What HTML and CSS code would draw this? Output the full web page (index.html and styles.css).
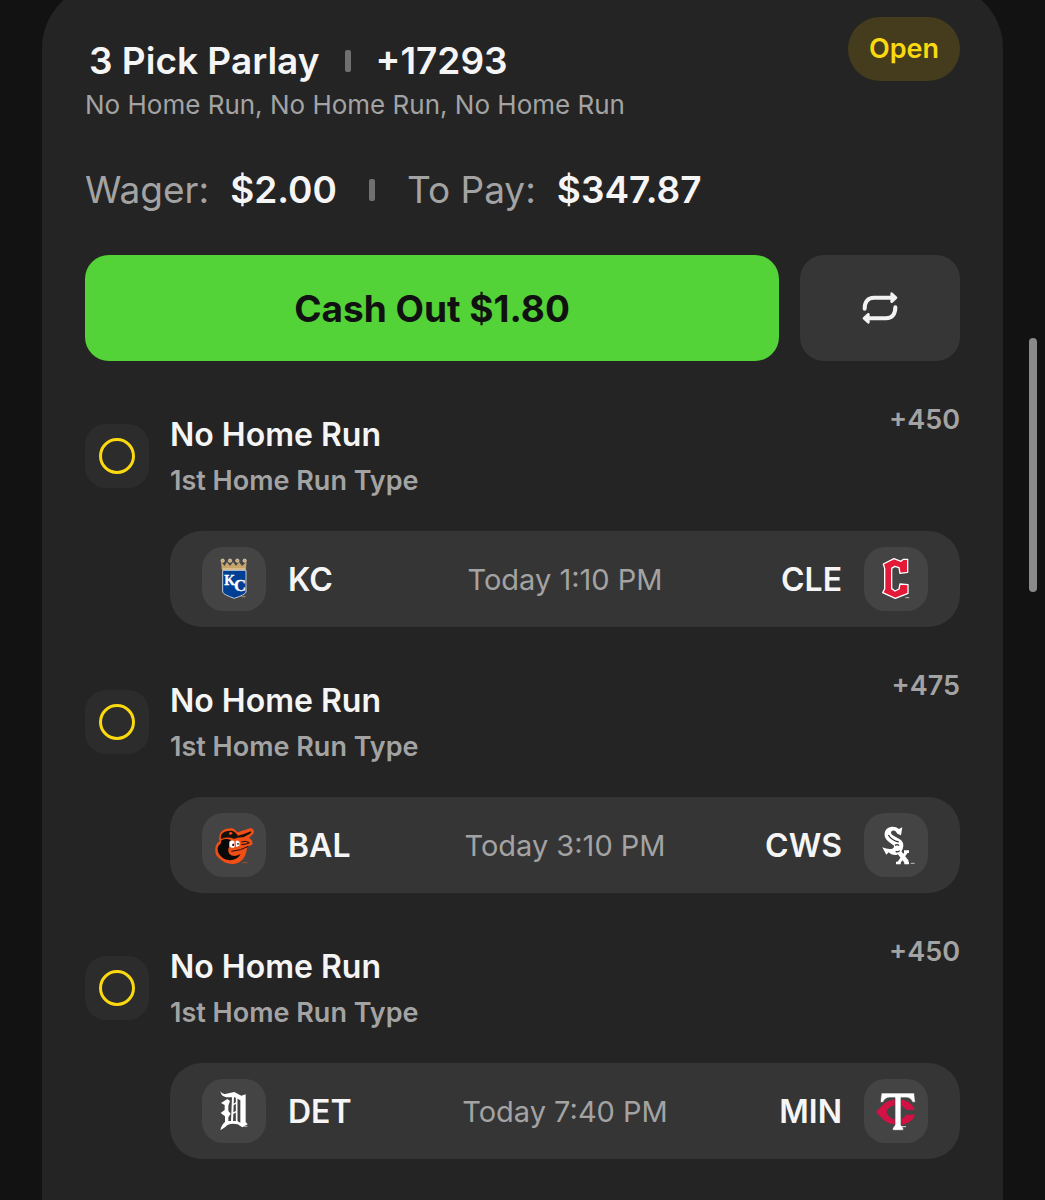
FILE: index.html
```html
<!DOCTYPE html>
<html lang="en">
<head>
<meta charset="utf-8">
<meta name="viewport" content="width=device-width, initial-scale=1">
<title>3 Pick Parlay</title>
<link rel="stylesheet" href="styles.css">
</head>
<body>
<main class="page">
  <article class="card">
    <header class="header">
      <div class="heading">
        <h1 class="title">3 Pick Parlay <span class="divider"></span> +17293</h1>
        <p class="summary">No Home Run, No Home Run, No Home Run</p>
      </div>
      <span class="status">Open</span>
    </header>

    <div class="stakes">
      <p class="stake"><span class="stake-label">Wager:</span><strong>$2.00</strong></p>
      <span class="divider"></span>
      <p class="stake"><span class="stake-label">To Pay:</span><strong>$347.87</strong></p>
    </div>

    <div class="actions">
      <button class="cashout" type="button">Cash Out $1.80</button>
      <button class="repeat" type="button" aria-label="Repeat bet">
        <svg width="40" height="40" viewBox="0 -6 120 120" fill="none" stroke="#f2f2f2" stroke-width="12" stroke-linecap="round" stroke-linejoin="round">
          <path d="M14 56C14 36 23 23 42 23H98M106 52C106 72 97 85 78 85H22"/>
          <path d="M95 11L108 23L95 35ZM25 73L12 85L25 97Z" fill="#f2f2f2" stroke-width="8"/>
        </svg>
      </button>
    </div>

    <section class="pick">
      <div class="pick-head">
        <span class="marker"></span>
        <div class="pick-text">
          <h2 class="pick-name">No Home Run</h2>
          <p class="pick-type">1st Home Run Type</p>
        </div>
        <span class="odds">+450</span>
      </div>
      <div class="game">
        <div class="team">
          <svg class="logo" viewBox="6 6 192 192" aria-hidden="true">
            <path d="M68 76V141Q70 149 103 160Q136 149 138 141V76Z" fill="#003f93" stroke="#bcc9dc" stroke-width="3"/>
            <path d="M66 74L64 52L74 64L81 52L90 64L99 52L108 64L117 52L126 64L139 52L137 74Z" fill="#c9a468" stroke="#dcc494" stroke-width="1"/>
            <path d="M68 72H136" stroke="#e9d5ad" stroke-width="3"/>
            <g fill="#c9a468" stroke="#f2ead8" stroke-width="2"><circle cx="68" cy="47" r="5"/><circle cx="90" cy="47" r="5"/><circle cx="112" cy="47" r="5"/><circle cx="134" cy="47" r="5"/></g>
            <g fill="#fff" font-family="Liberation Serif, serif"><text x="73" y="120" font-size="41" stroke="#fff" stroke-width="1">K</text><text x="102" y="137" font-size="50" stroke="#fff" stroke-width="1">C</text></g>
            <path d="M124 155H137" stroke="#a58f63" stroke-width="3"/>
          </svg>
          <span>KC</span>
        </div>
        <time class="time">Today 1:10 PM</time>
        <div class="team team-away">
          <span>CLE</span>
          <svg class="logo" viewBox="6 6 192 192" aria-hidden="true">
            <path d="M64 57L96 41L117 49L124 43H137V82L114 85L111 68L98 64L89 70V131L99 138L111 132L114 117L138 119V145L100 160L62 143L68 132V70Z" fill="#e31937" stroke="#fff" stroke-width="4" stroke-linejoin="round"/>
            <path d="M130 158H142" stroke="#bbb" stroke-width="3"/>
          </svg>
        </div>
      </div>
    </section>

    <section class="pick">
      <div class="pick-head">
        <span class="marker"></span>
        <div class="pick-text">
          <h2 class="pick-name">No Home Run</h2>
          <p class="pick-type">1st Home Run Type</p>
        </div>
        <span class="odds">+475</span>
      </div>
      <div class="game">
        <div class="team">
          <svg class="logo" viewBox="6 6 192 192" aria-hidden="true">
            <path d="M58 86C55 66 67 52 94 52C103 52 108 60 113 64L152 51Q164 54 161 67L147 81Q160 88 157 101L142 107C139 124 137 140 119 153C95 167 66 156 49 133Q41 112 52 96L59 91Z" fill="#f04e14"/>
            <path d="M63 84C60 68 71 59 93 59C104 60 109 67 114 74L101 83Q84 76 63 84Z" fill="#17110e"/>
            <path d="M87 66Q93 60 98 67Q94 74 87 70Z" fill="#f04e14"/>
            <path d="M108 76Q128 72 153 61Q156 63 150 68L130 79Q116 77 100 85Z" fill="#17110e"/>
            <path d="M64 88Q78 81 92 87L89 105Q80 118 89 130Q101 140 122 129Q112 147 90 148Q63 145 54 123Q49 106 62 98Z" fill="#090909"/>
            <path d="M88 92Q98 85 103 91L104 108Q96 114 88 106ZM107 90Q115 86 119 94L118 104L108 108Z" fill="#fff"/>
            <path d="M97 98H102V105H97ZM112 96H116V101H112Z" fill="#111"/>
            <path d="M124 93Q138 88 148 95Q140 100 124 101M94 121Q122 119 145 106" fill="none" stroke="#17110e" stroke-width="3"/>
            <path d="M128 155H142" stroke="#a74b2d" stroke-width="3"/>
          </svg>
          <span>BAL</span>
        </div>
        <time class="time">Today 3:10 PM</time>
        <div class="team team-away">
          <span>CWS</span>
          <svg class="logo" viewBox="6 6 192 192" aria-hidden="true">
            <path d="M121 49L117 73L106 68Q101 57 91 59Q83 63 91 72L112 84Q125 91 124 105Q122 125 105 131Q89 134 80 124L73 131L61 109Q75 115 86 114Q97 113 96 104L80 92Q66 82 68 66Q71 49 89 47Q102 46 111 54Z" fill="#fff"/>
            <g fill="none" stroke="#fff">
              <path d="M108 119L135 154" stroke-width="14"/>
              <path d="M134 122L109 157" stroke-width="9"/>
              <path d="M126 122H141M102 156H116M127 156H141" stroke-width="8"/>
            </g>
            <path d="M79 72Q89 88 110 93M99 103Q106 98 111 104M101 121Q108 125 113 119" fill="none" stroke="#333" stroke-width="4"/>
            <path d="M146 157H158" stroke="#bbb" stroke-width="3"/>
          </svg>
        </div>
      </div>
    </section>

    <section class="pick">
      <div class="pick-head">
        <span class="marker"></span>
        <div class="pick-text">
          <h2 class="pick-name">No Home Run</h2>
          <p class="pick-type">1st Home Run Type</p>
        </div>
        <span class="odds">+450</span>
      </div>
      <div class="game">
        <div class="team">
          <svg class="logo" viewBox="6 6 192 192" aria-hidden="true">
            <path d="M61 43Q67 53 79 50L103 45L124 56L137 52V135L143 142L127 151L113 142Q88 136 76 150L61 160Q65 139 80 132H112L121 137V70L104 61H79Q64 59 61 43Z" fill="#fff"/>
            <path d="M63 78L82 66L90 72L85 86V102L92 110L85 121V136H75V118L62 108L74 99V84Z" fill="#fff"/>
            <path d="M99 59L96 134" fill="none" stroke="#fff" stroke-width="6"/>
            <path d="M110 60V136" fill="none" stroke="#fff" stroke-width="5"/>
            <path d="M98 84L110 77M97 110L110 103" fill="none" stroke="#fff" stroke-width="4"/>
            <path d="M130 148H142" stroke="#bbb" stroke-width="3"/>
          </svg>
          <span>DET</span>
        </div>
        <time class="time">Today 7:40 PM</time>
        <div class="team team-away">
          <span>MIN</span>
          <svg class="logo" viewBox="6 6 192 192" aria-hidden="true">
            <path d="M42 105L62 84Q78 67 108 67Q145 68 159 98H132Q124 85 105 84Q77 86 73 105Q78 126 105 128Q126 126 132 113H160Q148 143 108 143Q80 143 63 127Z" fill="#d31145"/>
            <path d="M58 48H157L160 76H151Q148 62 132 62H117V144L124 153V160H92V153L99 144V62H84Q67 62 64 76H55Z" fill="#fff" stroke="#444" stroke-width="2"/>
            <path d="M120 149H132" stroke="#ddd" stroke-width="3"/>
          </svg>
        </div>
      </div>
    </section>
  </article>
  <div class="scroll-thumb"></div>
</main>
</body>
</html>
```
FILE: styles.css
```css
*,
*::before {
  box-sizing: border-box;
}

body {
  margin: 0;
  background: #121212;
  color: #f5f5f5;
  font-family: Inter, "Liberation Sans", sans-serif;
}

h1, h2, p {
  margin: 0;
}

.page {
  position: relative;
  display: flex;
  min-height: 100vh;
  padding: 0 42px;
  overflow: hidden;
}

.card {
  flex: 1;
  min-width: 0;
  margin-top: -16px;
  padding: 33px 43px 40px;
  border-radius: 64px 64px 0 0;
  background: #242424;
}

.header {
  display: flex;
  justify-content: space-between;
  align-items: flex-start;
}

.heading {
  padding-top: 20px;
}

.title {
  display: flex;
  align-items: center;
  gap: 25px;
  padding-left: 4px;
  font-size: 37px;
  line-height: 48px;
  font-weight: 600;
}

.divider {
  width: 6px;
  height: 22px;
  border-radius: 2px;
  background: #707070;
}

.summary {
  margin-top: 3px;
  color: #a3a3a3;
  font-size: 26px;
  line-height: 34px;
}

.status {
  padding: 0 21px;
  border-radius: 32px;
  background: #443c1c;
  color: #fad911;
  font-size: 27px;
  line-height: 64px;
  font-weight: 600;
}

.stakes {
  display: flex;
  align-items: center;
  gap: 32px;
  margin-top: 44px;
  font-size: 37px;
  line-height: 48px;
}

.stake {
  display: flex;
  gap: 21px;
}

.stake-label {
  color: #a3a3a3;
}

.stake strong {
  font-weight: 600;
}

.actions {
  display: grid;
  grid-template-columns: 1fr 160px;
  gap: 21px;
  margin-top: 41px;
}

.actions button {
  height: 106px;
  padding: 0;
  border: 0;
  border-radius: 24px;
  font: inherit;
}

.actions .cashout {
  background: #53d337;
  color: #111;
  font-size: 37px;
  font-weight: 700;
}

.repeat {
  display: grid;
  place-items: center;
  background: #363636;
}

.pick {
  margin-top: 42px;
}

.pick-head {
  display: flex;
  align-items: center;
  gap: 21px;
  height: 106px;
}

.marker {
  display: grid;
  place-items: center;
  width: 64px;
  height: 64px;
  border-radius: 21px;
  background: #2c2c2c;
}

.marker::before {
  content: "";
  width: 36px;
  height: 36px;
  border: 3px solid #fad911;
  border-radius: 50%;
}

.pick-text {
  flex: 1;
}

.pick-name {
  font-size: 32px;
  line-height: 40px;
  font-weight: 600;
}

.pick-type {
  margin-top: 9px;
  color: #a3a3a3;
  font-size: 27px;
  line-height: 34px;
  font-weight: 600;
}

.odds {
  align-self: flex-start;
  color: #a3a3a3;
  font-size: 27px;
  line-height: 34px;
  font-weight: 600;
}

.game {
  display: grid;
  grid-template-columns: 1fr auto 1fr;
  align-items: center;
  margin: 22px 0 0 85px;
  padding: 16px 32px;
  border-radius: 32px;
  background: #353535;
}

.team {
  display: flex;
  align-items: center;
  gap: 22px;
  font-size: 32px;
  font-weight: 600;
}

.team-away {
  justify-content: flex-end;
}

.logo {
  width: 64px;
  height: 64px;
  border-radius: 21px;
  background: #444;
}

.time {
  color: #a3a3a3;
  font-size: 29px;
}

.scroll-thumb {
  position: absolute;
  top: 338px;
  right: 8px;
  width: 8px;
  height: 254px;
  border-radius: 4px;
  background: #8a8a8a;
}
```
